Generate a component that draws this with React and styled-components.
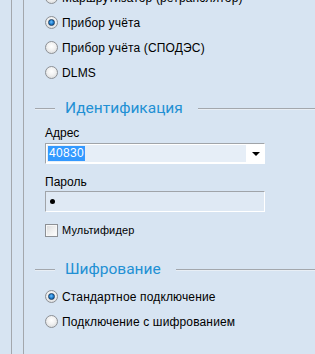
import React from "react";
import styled, { createGlobalStyle } from "styled-components";

const GlobalStyle = createGlobalStyle`
  html, body {
    margin: 0;
    padding: 0;
    background: #d7e4f2;
  }
  body {
    font-family: "Liberation Sans", Arial, sans-serif;
    font-size: 12px;
    color: #000;
  }
`;

const Page = styled.div`
  width: 315px;
  height: 354px;
  display: flex;
  overflow: hidden;
  background: #d7e4f2;
`;

const Rail = styled.div`
  width: 11px;
  flex-shrink: 0;
  border-right: 1px solid #a3a7ad;
`;

const Content = styled.div`
  flex: 1;
  display: flex;
  flex-direction: column;
  padding-left: 11px;
  margin-top: -15px;
`;

const Indent = styled.div`
  padding-left: 10px;
  display: flex;
  flex-direction: column;
  margin-top: ${(p) => p.top || 0}px;
`;

const OptionRow = styled.label`
  height: 25px;
  display: flex;
  align-items: center;
  gap: 4px;
  white-space: nowrap;
  letter-spacing: 0.15px;
`;

const RadioMark = styled.span`
  width: 11px;
  height: 11px;
  border-radius: 50%;
  border: 1px solid #8d9095;
  background: radial-gradient(circle at 50% 40%, #ffffff 0%, #f1f1f1 45%, #d0d2d4 100%);
  display: flex;
  align-items: center;
  justify-content: center;
  flex-shrink: 0;

  &::after {
    content: "";
    display: ${(p) => (p.checked ? "block" : "none")};
    width: 5px;
    height: 5px;
    border-radius: 50%;
    border: 1px solid #1a3f66;
    background: radial-gradient(circle at 45% 40%, #6fc1ff 0%, #1f7fd0 50%, #0d4b8a 100%);
  }
`;

const Box = styled.span`
  width: 11px;
  height: 11px;
  border: 1px solid #8d9095;
  background: linear-gradient(135deg, #d8d9db 0%, #f0f0f0 55%, #ffffff 100%);
  box-shadow: inset 0 0 0 1px #f7f7f7;
  flex-shrink: 0;
`;

const Small = styled.span`
  font-size: 11px;
`;

const SectionHeader = styled.div`
  height: 24px;
  display: flex;
  align-items: center;
  margin-top: ${(p) => p.top}px;
`;

const Rule = styled.div`
  height: 0;
  border-top: 1px solid #a3a7ad;
  border-bottom: 1px solid #e8eef5;
  width: ${(p) => (p.grow ? "auto" : "20px")};
  flex: ${(p) => (p.grow ? 1 : "none")};
  margin-top: 2px;
`;

const HeaderTitle = styled.span`
  font-family: Roboto, "Liberation Sans", sans-serif;
  font-size: 15.5px;
  color: #2290d4;
  padding: 0 15px 0 10px;
  white-space: nowrap;
`;

const FieldLabel = styled.div`
  height: 16px;
  line-height: 16px;
  margin-top: ${(p) => p.top}px;
`;

const Inset = styled.div`
  width: 220px;
  height: 21px;
  box-sizing: border-box;
  margin-top: ${(p) => p.top}px;
  border-top: 1px solid #a0a4a9;
  border-left: 1px solid #a0a4a9;
  border-right: 1px solid #ffffff;
  border-bottom: 1px solid #ffffff;
  display: flex;
  background: ${(p) => p.fill};
`;

const ComboField = styled.div`
  flex: 1;
  margin: 1px 0 1px 1px;
  background: #e6eef7;
  display: flex;
  align-items: center;
  padding-left: 1px;
`;

const Selected = styled.span`
  background: #3399ff;
  color: #fff;
  line-height: 15px;
  padding: 0 1px;
  letter-spacing: 0.3px;
`;

const ComboButton = styled.div`
  width: 18px;
  background: #ffffff;
  display: flex;
  align-items: center;
  justify-content: center;
`;

const Arrow = styled.span`
  width: 0;
  height: 0;
  border-left: 4px solid transparent;
  border-right: 4px solid transparent;
  border-top: 4px solid #000;
  margin-left: 2px;
`;

const Dot = styled.span`
  width: 5px;
  height: 5px;
  border-radius: 50%;
  background: #000;
  margin: auto 0 auto 4px;
`;

const CheckRow = styled(OptionRow)`
  height: 14px;
  margin-top: 11px;
`;

const Radio = ({ checked, children }) => (
  <OptionRow>
    <RadioMark checked={checked} />
    <span>{children}</span>
  </OptionRow>
);

export default function App() {
  return (
    <>
      <GlobalStyle />
      <Page>
        <Rail />
        <Rail />
        <Content>
          <Indent>
            <Radio>Маршрутизатор (ретранслятор)</Radio>
            <Radio checked>Прибор учёта</Radio>
            <Radio>Прибор учёта (СПОДЭС)</Radio>
            <Radio>DLMS</Radio>
          </Indent>

          <SectionHeader top={11}>
            <Rule />
            <HeaderTitle>Идентификация</HeaderTitle>
            <Rule grow />
          </SectionHeader>

          <Indent>
            <FieldLabel top={5}>Адрес</FieldLabel>
            <Inset top={2} fill="#ffffff">
              <ComboField>
                <Selected>40830</Selected>
              </ComboField>
              <ComboButton>
                <Arrow />
              </ComboButton>
            </Inset>
            <FieldLabel top={10}>Пароль</FieldLabel>
            <Inset top={1} fill="#dfe9f4">
              <Dot />
            </Inset>
            <CheckRow>
              <Box />
              <Small>Мультифидер</Small>
            </CheckRow>
          </Indent>

          <SectionHeader top={20}>
            <Rule />
            <HeaderTitle>Шифрование</HeaderTitle>
            <Rule grow />
          </SectionHeader>

          <Indent top={3}>
            <Radio checked>Стандартное подключение</Radio>
            <Radio>Подключение с шифрованием</Radio>
          </Indent>
        </Content>
      </Page>
    </>
  );
}
